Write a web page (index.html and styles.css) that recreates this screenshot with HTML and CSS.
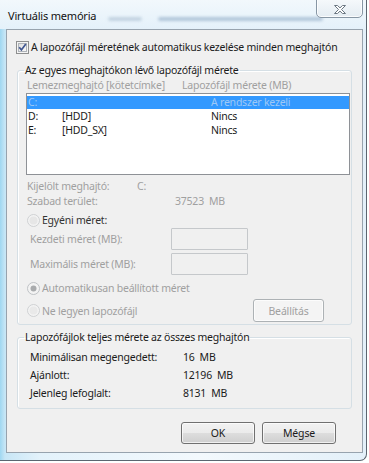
FILE: index.html
```html
<!DOCTYPE html>
<html lang="hu">

<head>
    <meta charset="UTF-8">
    <meta name="viewport" content="width=device-width, initial-scale=1.0">
    <title>Virtuális memória</title>
    <link rel="stylesheet" href="styles.css">
</head>

<body>
    <div class="window">
        <div class="titlebar">
            <span class="title">Virtuális memória</span>
            <span class="ghost ghost-a"></span>
            <span class="ghost ghost-b"></span>
            <button class="close-btn" type="button" aria-label="Bezárás">
                <svg width="14" height="11" viewBox="0 0 14 11">
                    <path d="M1.5 1.5h3l2.5 2.4 2.5-2.4h3l-4 4 4 4h-3l-2.5-2.4-2.5 2.4h-3l4-4z" fill="#fff" stroke="#6b7782" stroke-width="1" stroke-linejoin="round" />
                </svg>
            </button>
        </div>

        <div class="client">
            <label class="check-row">
                <svg class="checkbox" width="13" height="13" viewBox="0 0 13 13">
                    <defs>
                        <linearGradient id="cb" x1="0" y1="0" x2="1" y2="1">
                            <stop offset="0" stop-color="#dcdcdc" />
                            <stop offset="1" stop-color="#fbfbfb" />
                        </linearGradient>
                    </defs>
                    <rect x="0.5" y="0.5" width="12" height="12" fill="#f4f4f4" stroke="#8e8f8f" />
                    <rect x="2.5" y="2.5" width="8" height="8" fill="url(#cb)" stroke="#aeb3b9" />
                    <path d="M3.2 6.3l2.2 2.6 4.4-6" fill="none" stroke="#3f5590" stroke-width="1.7" />
                </svg>
                <span>A lapozófájl méretének automatikus kezelése minden meghajtón</span>
            </label>

            <fieldset class="group group-drives">
                <legend>Az egyes meghajtókon lévő lapozófájl mérete</legend>
                <div class="cols disabled">
                    <span class="col-drive">Lemezmeghajtó [kötetcímke]</span>
                    <span>Lapozófájl mérete (MB)</span>
                </div>
                <div class="listbox">
                    <div class="list-row selected">
                        <span>C:</span><span></span><span>A rendszer kezeli</span>
                    </div>
                    <div class="list-row">
                        <span>D:</span><span>[HDD]</span><span>Nincs</span>
                    </div>
                    <div class="list-row">
                        <span>E:</span><span>[HDD_SX]</span><span>Nincs</span>
                    </div>
                </div>

                <div class="info disabled">
                    <div class="info-row"><span class="info-label">Kijelölt meghajtó:</span><span>C:</span></div>
                    <div class="info-row"><span class="info-label wide">Szabad terület:</span><span>37523&nbsp; MB</span></div>
                </div>

                <div class="radio-row custom">
                    <svg class="radio" width="13" height="13" viewBox="0 0 13 13">
                        <circle cx="6.5" cy="6.5" r="6" fill="#f3f3f3" stroke="#cfd1d3" />
                        <circle cx="6.5" cy="6.5" r="4" fill="#e6e6e6" />
                    </svg>
                    <span>Egyéni méret:</span>
                </div>
                <div class="size-row first">
                    <span class="size-label">Kezdeti méret (MB):</span>
                    <span class="size-input"></span>
                </div>
                <div class="size-row">
                    <span class="size-label">Maximális méret (MB):</span>
                    <span class="size-input"></span>
                </div>
                <div class="radio-row auto disabled">
                    <svg class="radio" width="13" height="13" viewBox="0 0 13 13">
                        <circle cx="6.5" cy="6.5" r="6" fill="#f3f3f3" stroke="#bfc2c5" />
                        <circle cx="6.5" cy="6.5" r="3" fill="#a9abad" />
                    </svg>
                    <span>Automatikusan beállított méret</span>
                </div>
                <div class="radio-row none disabled">
                    <svg class="radio" width="13" height="13" viewBox="0 0 13 13">
                        <circle cx="6.5" cy="6.5" r="6" fill="#f3f3f3" stroke="#cfd1d3" />
                        <circle cx="6.5" cy="6.5" r="4" fill="#e9e9e9" />
                    </svg>
                    <span>Ne legyen lapozófájl</span>
                    <button class="btn btn-disabled" type="button" disabled>Beállítás</button>
                </div>
            </fieldset>

            <fieldset class="group group-total">
                <legend>Lapozófájlok teljes mérete az összes meghajtón</legend>
                <div class="total-row"><span class="total-label">Minimálisan megengedett:</span><span>16&nbsp; MB</span></div>
                <div class="total-row"><span class="total-label">Ajánlott:</span><span>12196&nbsp; MB</span></div>
                <div class="total-row"><span class="total-label">Jelenleg lefoglalt:</span><span>8131&nbsp; MB</span></div>
            </fieldset>

            <div class="dialog-buttons">
                <button class="btn" type="button">OK</button>
                <button class="btn" type="button">Mégse</button>
            </div>
        </div>
    </div>
</body>

</html>
```

FILE: styles.css
```css
body {
    margin: 0;
    padding: 0;
    background-color: #fff;
    font-family: "Noto Sans", "Open Sans", sans-serif;
    font-size: 10.5px;
    letter-spacing: -0.22px;
    color: #1b1b1b;
}

.window {
    position: relative;
    box-sizing: border-box;
    width: 367px;
    height: 461px;
    border-right: 1px solid #5b6670;
    border-bottom: 1px solid #5b6670;
    border-bottom-right-radius: 7px;
    background: linear-gradient(to right, #9fd7f1 0, #c7e6f6 5px, #e3f2fb 40px, #f3f9fd 200px, #e3f0f9 366px);
}

/* title bar */
.titlebar {
    display: flex;
    align-items: center;
    height: 29px;
    padding-left: 8px;
    box-sizing: border-box;
    background: linear-gradient(#f2f8fc, #e4f1fa);
}

.title {
    font-size: 11px;
    letter-spacing: -0.2px;
    color: #111;
    padding-top: 1px;
}

.ghost {
    height: 4px;
    margin-top: 8px;
    border-radius: 2px;
    background-color: #a9bdd0;
    filter: blur(1.5px);
}

.ghost-a {
    width: 34px;
    margin-left: 12px;
    opacity: 0.6;
}

.ghost-b {
    width: 165px;
    margin-left: 16px;
    background-color: #9ab3cc;
    opacity: 0.7;
}

.close-btn {
    position: absolute;
    top: -3px;
    left: 316px;
    width: 47px;
    height: 21px;
    padding: 0;
    border: 1px solid #8796a4;
    border-radius: 0 0 5px 5px;
    background: linear-gradient(#f7fafc, #e4ecf2);
    box-shadow: inset 0 0 0 1px rgba(255, 255, 255, 0.8);
    display: flex;
    align-items: center;
    justify-content: center;
    padding-top: 3px;
}

/* client area */
.client {
    box-sizing: border-box;
    width: 357px;
    height: 424px;
    margin-left: 6px;
    border: 1px solid #97a3ae;
    background-color: #f0f0f0;
}

.check-row {
    display: flex;
    align-items: center;
    height: 13px;
    margin-top: 11px;
    padding-left: 9px;
    line-height: 13px;
    white-space: nowrap;
}

.check-row span {
    margin-left: 2px;
}

.checkbox,
.radio {
    flex: none;
    display: block;
}

.group {
    box-sizing: border-box;
    width: 335px;
    margin: 8px 0 0 10px;
    padding: 0 8px 2px 8px;
    border: 1px solid #d5dfe5;
    border-radius: 3px;
    box-shadow: inset 1px 1px 0 #fff;
}

.group legend {
    padding: 0 1px;
    margin-left: -2px;
    line-height: 16px;
}

.disabled {
    color: #a0a0a0;
}

.cols {
    display: flex;
    height: 14px;
    line-height: 14px;
    padding-left: 1px;
    white-space: nowrap;
}

.col-drive {
    width: 155px;
}

.listbox {
    box-sizing: border-box;
    height: 82px;
    margin-top: 1px;
    margin-right: -7px;
    padding-top: 2px;
    border: 1px solid #8e9196;
    background-color: #fff;
}

.list-row {
    display: grid;
    grid-template-columns: 34px 149px 1fr;
    height: 13px;
    line-height: 13px;
    padding-left: 1px;
    margin-bottom: 1px;
}

.list-row.selected {
    background-color: #3399ff;
    color: #9ec8f6;
}

.info {
    margin-top: 4px;
}

.info-row {
    display: flex;
    height: 15px;
    line-height: 15px;
    padding-left: 1px;
}

.info-label {
    width: 110px;
}

.info-label.wide {
    width: 148px;
}

.radio-row {
    display: flex;
    align-items: center;
    padding-left: 1px;
}

.radio-row span {
    margin-left: 2px;
}

.radio-row.custom {
    height: 14px;
    margin-top: 4px;
    color: #333;
}

.radio-row.auto {
    height: 14px;
    margin-top: 6px;
}

.radio-row.none {
    height: 23px;
    margin-top: 4px;
}

.size-row {
    display: flex;
    align-items: center;
    height: 22px;
    margin-top: 3px;
    padding-left: 4px;
    color: #a0a0a0;
}

.size-row.first {
    margin-top: 1px;
}

.size-label {
    width: 141px;
}

.size-input {
    box-sizing: border-box;
    width: 77px;
    height: 22px;
    border: 1px solid #c5c8cb;
    border-radius: 1px;
}

.btn {
    box-sizing: border-box;
    width: 74px;
    height: 22px;
    padding: 0;
    font-family: inherit;
    font-size: 10.5px;
    letter-spacing: -0.15px;
    color: #1b1b1b;
    border: 1px solid #707070;
    border-radius: 3px;
    background: linear-gradient(#f2f2f2 0, #ebebeb 50%, #dddddd 51%, #cfcfcf 100%);
    box-shadow: inset 0 0 0 1px rgba(255, 255, 255, 0.7);
}

.btn-disabled {
    width: 71px;
    height: 23px;
    margin-left: auto;
    margin-right: 19px;
    color: #a0a0a0;
    border-color: #adb2b5;
    background: #f4f4f4;
}

.group-total {
    margin-top: 4px;
    padding-bottom: 6px;
}

.total-row {
    display: flex;
    height: 18px;
    line-height: 18px;
    padding-left: 4px;
}

.group-total legend + .total-row {
    margin-top: 3px;
}

.total-label {
    width: 153px;
}

.dialog-buttons {
    display: flex;
    justify-content: flex-end;
    gap: 7px;
    margin-top: 13px;
    padding-right: 26px;
}
```
